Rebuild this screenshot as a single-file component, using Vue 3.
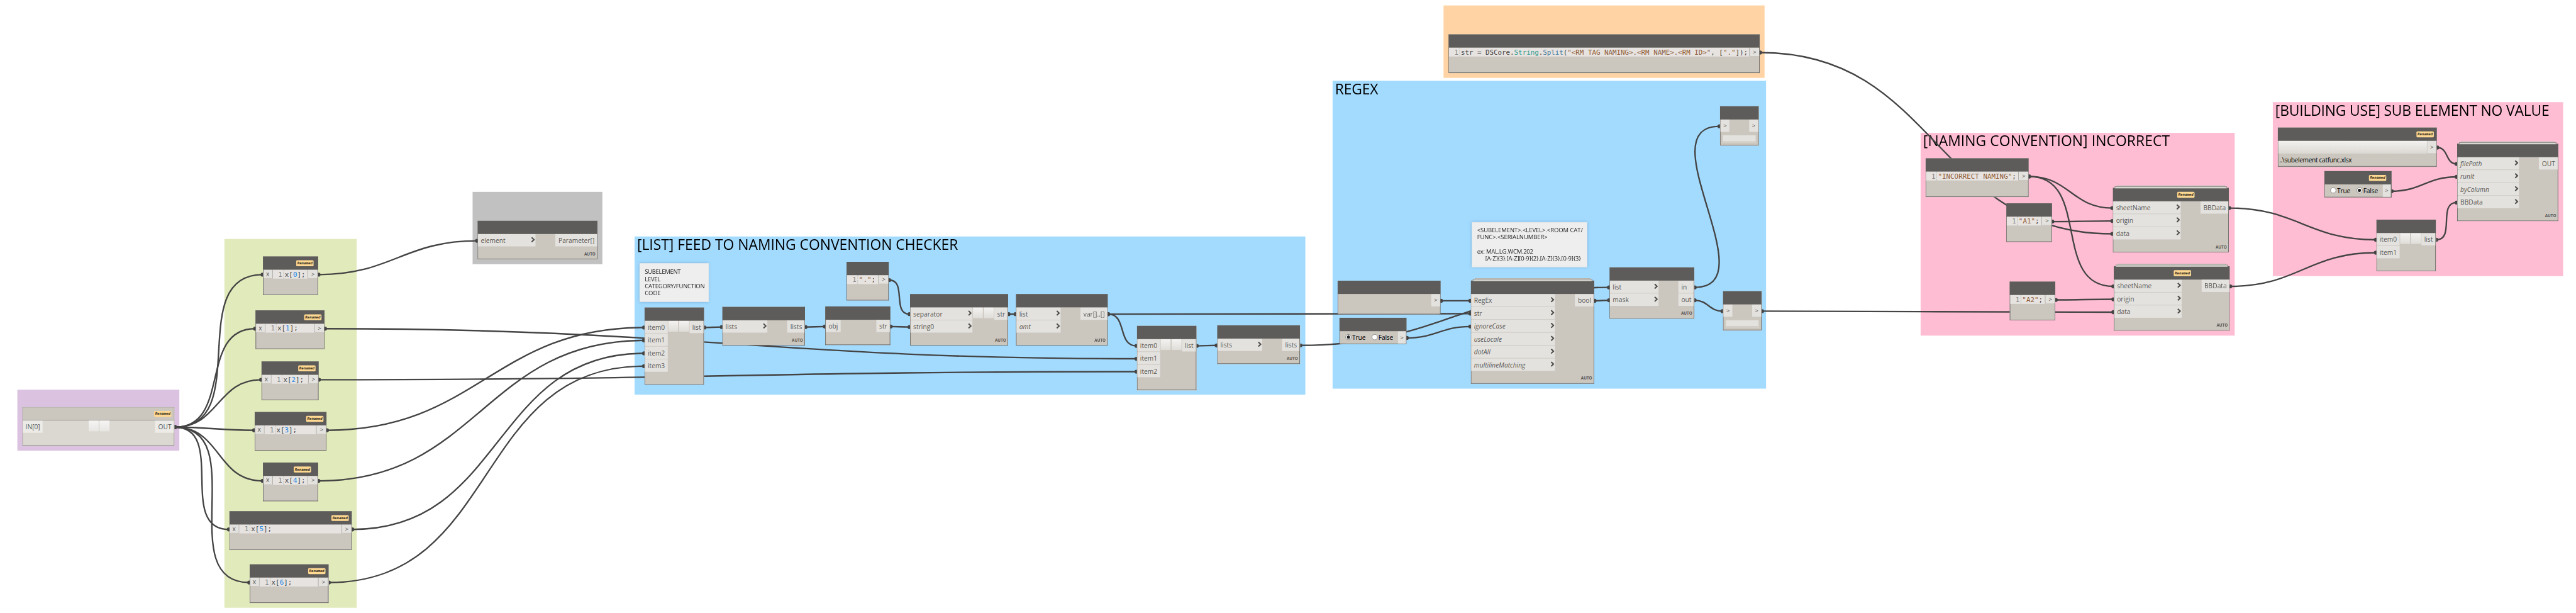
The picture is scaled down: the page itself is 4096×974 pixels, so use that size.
<script setup>
const SCALE = 4096 / 5200

// Adjusts tracking so that a run of text spans the given width.
const vFit = {
  mounted(el, { value }) {
    if (!value) return
    const w = el.getBoundingClientRect().width / SCALE
    el.style.letterSpacing = (value - w) / el.textContent.length + 'px'
  },
}

const groups = [
  { x: 35, y: 786, r: 362, b: 909, c: 'purple' },
  { x: 453, y: 482, r: 720, b: 1226, c: 'green' },
  { x: 954, y: 387, r: 1216, b: 533, c: 'grey' },
  { x: 1281, y: 477, r: 2635, b: 796, c: 'blue', title: '[LIST] FEED TO NAMING CONVENTION CHECKER', tw: 648 },
  { x: 2690, y: 163, r: 3565, b: 784, c: 'blue', title: 'REGEX', tw: 87 },
  { x: 2914, y: 11, r: 3562, b: 157, c: 'orange' },
  { x: 3877, y: 268, r: 4511, b: 677, c: 'pink', title: '[NAMING CONVENTION] INCORRECT', tw: 498 },
  { x: 4588, y: 206, r: 5174, b: 557, c: 'pink', title: '[BUILDING USE] SUB ELEMENT NO VALUE', tw: 553 },
]

const idx = (n) => [['x['], [String(n), 'num'], ['];']]
const str = (s) => [['"' + s + '"', 'str'], [';']]

const nodes = [
  { id: 'in', x: 45, y: 821, r: 352, b: 899, kind: 'io', badge: 310, ins: ['IN[0]'], inR: 86, btn: [179, 201], outs: ['OUT'], outX: 313 },
  { id: 'x0', x: 531, y: 517, r: 642, code: idx(0), x1: true, edR: 622, badge: 598 },
  { id: 'x1', x: 516, y: 626, r: 655, code: idx(1), x1: true, edR: 635, badge: 614 },
  { id: 'x2', x: 528, y: 729, r: 643, code: idx(2), x1: true, edR: 623, badge: 602 },
  { id: 'x3', x: 514, y: 831, r: 659, code: idx(3), x1: true, edR: 639, badge: 618 },
  { id: 'x4', x: 531, y: 933, r: 642, code: idx(4), x1: true, edR: 622, badge: 593 },
  { id: 'x5', x: 463, y: 1031, r: 710, code: idx(5), x1: true, edR: 690, badge: 669 },
  { id: 'x6', x: 504, y: 1138, r: 663, code: idx(6), x1: true, edR: 643, badge: 622 },
  { id: 'param', x: 964, y: 445, r: 1206, b: 523, ins: ['element'], chev: true, inR: 1081, outs: ['Parameter[]'], outX: 1121, auto: true },
  { id: 'list1', x: 1301, y: 620, r: 1421, b: 776, ins: ['item0', 'item1', 'item2', 'item3'], inR: 1348, btn: [1349, 1371], outs: ['list'], outX: 1392 },
  { id: 'flat1', x: 1458, y: 619, r: 1625, b: 697, ins: ['lists'], chev: true, inR: 1549, outs: ['lists'], outX: 1589, auto: true },
  { id: 'obj', x: 1666, y: 618, r: 1797, b: 696, ins: ['obj'], inR: 1697, outs: ['str'], outX: 1769 },
  { id: 'dot', x: 1709, y: 528, r: 1794, code: [['"."', 'str'], [';']], edR: 1774 },
  { id: 'join', x: 1837, y: 593, r: 2035, b: 697, ins: ['separator', 'string0'], chev: true, inR: 1963, btn: [1964, 1986], outs: ['str'], outX: 2007, auto: true },
  { id: 'amt', x: 2051, y: 593, r: 2236, b: 697, ins: ['list', '*amt'], chev: true, inR: 2141, outs: ['var[]..[]'], outX: 2181, auto: true },
  { id: 'list2', x: 2295, y: 657, r: 2415, b: 787, ins: ['item0', 'item1', 'item2'], inR: 2342, btn: [2343, 2365], outs: ['list'], outX: 2386 },
  { id: 'flat2', x: 2457, y: 656, r: 2624, b: 734, ins: ['lists'], chev: true, inR: 2548, outs: ['lists'], outX: 2588, auto: true },
  { id: 'blank', x: 2700, y: 566, r: 2908, b: 634, outs: ['>'], outX: 2889 },
  { id: 'bool1', x: 2704, y: 641, r: 2839, b: 694, radio: 'True', outs: ['>'], outX: 2820 },
  { id: 'regex', x: 2969, y: 566, r: 3218, b: 774, stack: true, ins: ['RegEx', 'str', '*ignoreCase', '*useLocale', '*dotAll', '*multilineMatching'], chev: true, inR: 3139, outs: ['bool'], outX: 3179, auto: true },
  { id: 'mask', x: 3249, y: 539, r: 3420, b: 643, ins: ['list', 'mask'], chev: true, inR: 3348, outs: ['in', 'out'], outX: 3388, leftOut: true, auto: true },
  { id: 'w1', x: 3472, y: 214, r: 3550, b: 293, ins: ['>'], inR: 3491, outs: ['>'], outX: 3531, watch: true },
  { id: 'w2', x: 3478, y: 587, r: 3556, b: 666, ins: ['>'], inR: 3497, outs: ['>'], outX: 3537, watch: true },
  {
    id: 'split', x: 2924, y: 69, r: 3552, edR: 3532, codeW: 579,
    code: [['str = DSCore.'], ['String', 'cls'], ['.'], ['Split', 'fn'], ['('], ['"<RM TAG NAMING>.<RM NAME>.<RM ID>"', 'str'], [', ['], ['"."', 'str'], [']);']],
  },
  { id: 'inc', x: 3887, y: 319, r: 4095, code: str('INCORRECT NAMING'), edR: 4075 },
  { id: 'a1', x: 4050, y: 410, r: 4142, code: str('A1'), edR: 4122 },
  { id: 'a2', x: 4057, y: 568, r: 4149, code: str('A2'), edR: 4129 },
  { id: 's1', x: 4265, y: 379, r: 4499, b: 509, stack: true, badge: 4395, ins: ['sheetName', 'origin', 'data'], chev: true, inR: 4402, outs: ['BBData'], outX: 4442, auto: true },
  { id: 's2', x: 4267, y: 537, r: 4501, b: 667, stack: true, badge: 4388, ins: ['sheetName', 'origin', 'data'], chev: true, inR: 4404, outs: ['BBData'], outX: 4444, auto: true },
  { id: 'file', x: 4598, y: 257, r: 4919, b: 336, badge: 4878, file: '..\\subelement catfunc.xlsx', outs: ['>'], outX: 4900 },
  { id: 'bool2', x: 4692, y: 345, r: 4827, b: 398, badge: 4782, radio: 'False', outs: ['>'], outX: 4808 },
  { id: 'xl', x: 4960, y: 290, r: 5164, b: 446, stack: true, ins: ['*filePath', '*runIt', '*byColumn', 'BBData'], chev: true, inR: 5085, outs: ['OUT'], outX: 5125, auto: true },
  { id: 'list3', x: 4797, y: 443, r: 4917, b: 547, ins: ['item0', 'item1'], inR: 4844, btn: [4845, 4867], outs: ['list'], outX: 4888 },
].map((n) => ({ ...n, b: n.b ?? n.y + 78 }))

const byId = Object.fromEntries(nodes.map((n) => [n.id, n]))

const links = [
  ...[0, 1, 2, 3, 4, 5, 6].map((i) => ['in', 0, 'x' + i, 0]),
  ['x0', 0, 'param', 0], ['x1', 0, 'list2', 1], ['x2', 0, 'list2', 2],
  ['x3', 0, 'list1', 0], ['x4', 0, 'list1', 1], ['x5', 0, 'list1', 2], ['x6', 0, 'list1', 3],
  ['list1', 0, 'flat1', 0], ['flat1', 0, 'obj', 0], ['obj', 0, 'join', 1], ['dot', 0, 'join', 0],
  ['join', 0, 'amt', 0], ['amt', 0, 'list2', 0], ['amt', 0, 'regex', 1],
  ['list2', 0, 'flat2', 0], ['flat2', 0, 'mask', 0], ['blank', 0, 'regex', 0], ['bool1', 0, 'regex', 2],
  ['regex', 0, 'mask', 1], ['mask', 0, 'w1', 0], ['mask', 1, 'w2', 0], ['w2', 0, 's2', 2],
  ['split', 0, 's1', 2], ['inc', 0, 's1', 0], ['inc', 0, 's2', 0], ['a1', 0, 's1', 1], ['a2', 0, 's2', 1],
  ['s1', 0, 'list3', 0], ['s2', 0, 'list3', 1], ['list3', 0, 'xl', 3], ['file', 0, 'xl', 0], ['bool2', 0, 'xl', 1],
]

const portY = (n, i) => n.y + (n.code ? 37 : 40.7 + 26 * i)
const wires = links.map(([a, i, b, j]) => {
  const p = { x: byId[a].r + 1, y: portY(byId[a], i) }
  const q = { x: byId[b].x - 1, y: portY(byId[b], j) }
  const k = 0.45 * Math.hypot(q.x - p.x, q.y - p.y)
  return { p, q, d: `M${p.x} ${p.y}C${p.x + k} ${p.y} ${q.x - k} ${q.y} ${q.x} ${q.y}` }
})

const notes = [
  { x: 1291, y: 531, r: 1431, b: 609, px: 9.5, py: 9.3, lines: [['SUBELEMENT', 72.5], ['LEVEL', 32], ['CATEGORY/FUNCTION', 121], ['CODE', 32]] },
  {
    x: 2971, y: 447.5, r: 3204, b: 539, px: 9.7, py: 8.5,
    lines: [['<SUBELEMENT>.<LEVEL>.<ROOM CAT/', 213.5], ['FUNC>.<SERIALNUMBER>', 142], ['', 0], ['ex: MAL.LG.WCM.202', 113], ['[A-Z]{3}.[A-Z][0-9]{2}.[A-Z]{3}.[0-9]{3}', 193, true]],
  },
]

const box = (o) => ({ left: o.x + 'px', top: o.y + 'px', width: o.r - o.x + 'px', height: o.b - o.y + 'px' })
const px = (v) => v + 'px'
const plain = (t) => t.replace(/^\*/, '')
</script>

<template>
  <div class="viewport">
    <div class="canvas">
      <section v-for="(g, i) in groups" :key="i" class="group" :class="g.c" :style="box(g)">
        <h2 v-if="g.title" v-fit="g.tw">{{ g.title }}</h2>
      </section>

      <svg class="wires" viewBox="0 0 5200 1236" width="5200" height="1236">
        <g v-for="(w, i) in wires" :key="i">
          <path :d="w.d" />
          <circle :cx="w.p.x" :cy="w.p.y" r="4" />
          <circle :cx="w.q.x" :cy="w.q.y" r="4" />
        </g>
      </svg>

      <div v-for="(n, i) in notes" :key="'n' + i" class="note" :style="{ ...box(n), padding: n.py + 'px ' + n.px + 'px' }">
        <div v-for="(l, k) in n.lines" :key="k" class="line" :class="{ indent: l[2] }"><span v-fit="l[1]">{{ l[0] }}</span></div>
      </div>

      <article v-for="n in nodes" :key="n.id" class="node" :class="[n.kind, { stack: n.stack }]" :style="box(n)">
        <header>
          <span v-if="n.badge" class="badge" :style="{ left: px(n.badge - n.x) }">Renamed</span>
        </header>

        <div v-if="n.code" class="body">
          <div v-if="n.x1" class="pin left">x</div>
          <div class="editor" :style="{ width: px(n.edR - n.x - (n.x1 ? 20 : 1)) }">
            <span class="lineno">1</span>
            <code v-fit="n.codeW"><span v-for="(t, k) in n.code" :key="k" :class="t[1]">{{ t[0] }}</span></code>
          </div>
          <div class="pin right">&gt;</div>
        </div>

        <div v-else class="body">
          <div v-if="n.ins" class="ports" :style="{ width: px(n.inR - n.x - 1) }">
            <div v-for="(t, k) in n.ins" :key="k" class="port" :class="{ opt: t[0] === '*', arrow: t === '>' }">
              <span>{{ plain(t) }}</span>
              <svg v-if="n.chev" class="chev" viewBox="0 0 8 11" width="8" height="11"><path d="M1.2 1L5.9 5.5L1.2 10" /></svg>
            </div>
          </div>
          <div v-if="n.btn" class="buttons"><i /><i /></div>
          <div v-if="n.radio" class="radios">
            <label v-for="o in ['True', 'False']" :key="o"><b :class="{ on: n.radio === o }" />{{ o }}</label>
          </div>
          <div v-if="n.file" class="browse" />
          <div class="ports outs" :class="{ start: n.leftOut }" :style="{ width: px(n.r - n.outX - 1) }">
            <div v-for="(t, k) in n.outs" :key="k" class="port" :class="{ arrow: t === '>' }"><span>{{ t }}</span></div>
          </div>
        </div>

        <div v-if="n.file" class="path"><span v-fit="146">{{ n.file }}</span></div>
        <div v-if="n.watch" class="screen" />
        <footer v-if="n.auto">AUTO</footer>
      </article>
    </div>
  </div>
</template>

<style>
body { margin: 0; background: #fff; }
</style>

<style scoped>
.viewport { width: 4096px; height: 974px; overflow: hidden; background: #fff; }
.canvas {
  position: relative; width: 5200px; height: 1236px;
  transform: scale(0.787692); transform-origin: 0 0;
  font-family: "Open Sans", "Noto Sans", sans-serif; font-size: 13px; color: #585755;
}
.canvas * { box-sizing: border-box; }

.group { position: absolute; padding: 0 5px; }
.purple { background: #dcc2e1; }
.green { background: #e1eabb; }
.grey { background: #c1c1c1; }
.blue { background: #a3dbff; }
.orange { background: #ffd3a3; }
.pink { background: #ffbdd4; }
h2 {
  display: inline-block; margin: 0; white-space: nowrap; color: #000;
  font-size: 29px; font-weight: 400; line-height: 31px;
}

.wires { position: absolute; left: 0; top: 0; }
.wires path { fill: none; stroke: #444; stroke-width: 3; }
.wires circle { fill: #444; }

.note {
  position: absolute; background: #eee; border: 1px solid #dbe4ea;
  box-shadow: 0 0 6px rgba(70, 120, 160, 0.45);
  font-size: 12px; line-height: 14.3px; color: #222; white-space: nowrap;
}
.line { height: 14.3px; }
.line span { display: inline-block; }
.indent { padding-left: 16.5px; }

.node {
  position: absolute; display: flex; flex-direction: column;
  background: #cbc6be; border: 1px solid #5d5c5a; border-top: 0;
}
.node header { position: relative; flex: none; height: 27px; margin: 0 -1px; background: #5d5c5a; }
.node.io { background: #dbd8d1; border: 1px solid #83807b; }
.node.io header { height: 26px; margin: 0; background: #cbc6be; border-bottom: 1px solid #83807b; }

/* Sheet edges peeking out above grouped custom nodes */
.stack::before, .stack::after {
  content: ""; position: absolute; border: 1px solid #868583; border-bottom: 0; background: #d9d8d0;
}
.stack::before { left: 7px; right: 7px; top: -5px; height: 2px; border-color: #a6a5a2; }
.stack::after { left: 3px; right: 3px; top: -3px; height: 3px; }

.badge {
  position: absolute; top: 8px; width: 35px; height: 12px; border-radius: 2px;
  background: #ffd993; color: #2d2718; text-align: center;
  font: italic bold 7.3px/12.5px "DejaVu Sans Mono", monospace;
}
.io .badge { top: 7px; }

.body { display: flex; align-items: flex-start; flex: none; }
.pin { width: 19px; height: 17px; line-height: 17.5px; background: #e4e2de; text-align: center; }
.pin.left { border-right: 1px solid #a5a39f; padding-right: 1px; }
.pin.right { margin-left: auto; border-left: 1px solid #a5a39f; width: 20px; font-size: 12.5px; padding-left: 1px; }
.editor {
  display: flex; height: 18px; line-height: 19px; background: #e7e3e0;
  font-family: "DejaVu Sans Mono", monospace; font-size: 13.8px; color: #444; white-space: pre;
}
.lineno { flex: none; width: 22px; padding-right: 2px; text-align: right; color: #858585; border-right: 1px dashed #b5b2af; }
code { display: inline-block; margin-left: 2px; font: inherit; line-height: 19px; }
.num { color: #2585e5; }
.str { color: #8f5d3a; }
.cls { color: #2f9e92; }
.fn { color: #417a9d; }

.ports { display: flex; flex-direction: column; gap: 1px; background: #c9c5c0; }
.port {
  display: flex; align-items: center; justify-content: space-between;
  height: 25px; padding: 1px 1px 0 5.5px; background: #e4e2de; line-height: 24px;
}
.io .port { background: #ecebe7; }
.opt { font-style: italic; }
.outs { margin-left: auto; }
.outs .port { justify-content: flex-end; padding: 1px 5px 0 0; }
.outs.start .port { justify-content: flex-start; padding-left: 6px; }
.port.arrow { justify-content: center; padding: 0; font-size: 12.5px; }
.chev { display: block; margin-top: -3px; }
.chev path { fill: none; stroke: #4e4d4b; stroke-width: 2.6; }

.buttons { display: flex; gap: 2px; margin-left: 1px; }
.buttons i { width: 20px; height: 22px; background: linear-gradient(#f4f3f2, #dfddd8); }
.io .buttons { margin-left: 93px; }
.io .buttons i { background: linear-gradient(#f6f5f4, #e7e6e3); }

.radios { display: flex; padding-left: 10.5px; }
.radios label { display: flex; align-items: center; width: 53px; height: 25px; padding-top: 1px; font-size: 13px; color: #000; letter-spacing: -0.2px; }
.radios b { flex: none; width: 12px; height: 12px; margin: -2px 2px 0 0; border: 1px solid #777; border-radius: 50%; background: #fff; }
.radios b.on { background: radial-gradient(circle, #222 0 3px, #fff 3.5px); }

.browse { width: 300px; height: 26px; background: linear-gradient(#f3f2f0, #dbd8d2); }
.path { padding-left: 2px; line-height: 26px; color: #000; white-space: nowrap; }
.path span { display: inline-block; }

.screen { width: 68px; height: 15px; margin: 7px auto 0; background: #e4e2de; border: 0 solid #cbc6be; border-width: 0 1px; box-shadow: inset 0 -2px #d3d0ca, inset 0 -3px #cbc6be; }

footer { margin: auto 3px 5px auto; font-size: 8px; line-height: 10px; font-weight: 700; }
</style>
